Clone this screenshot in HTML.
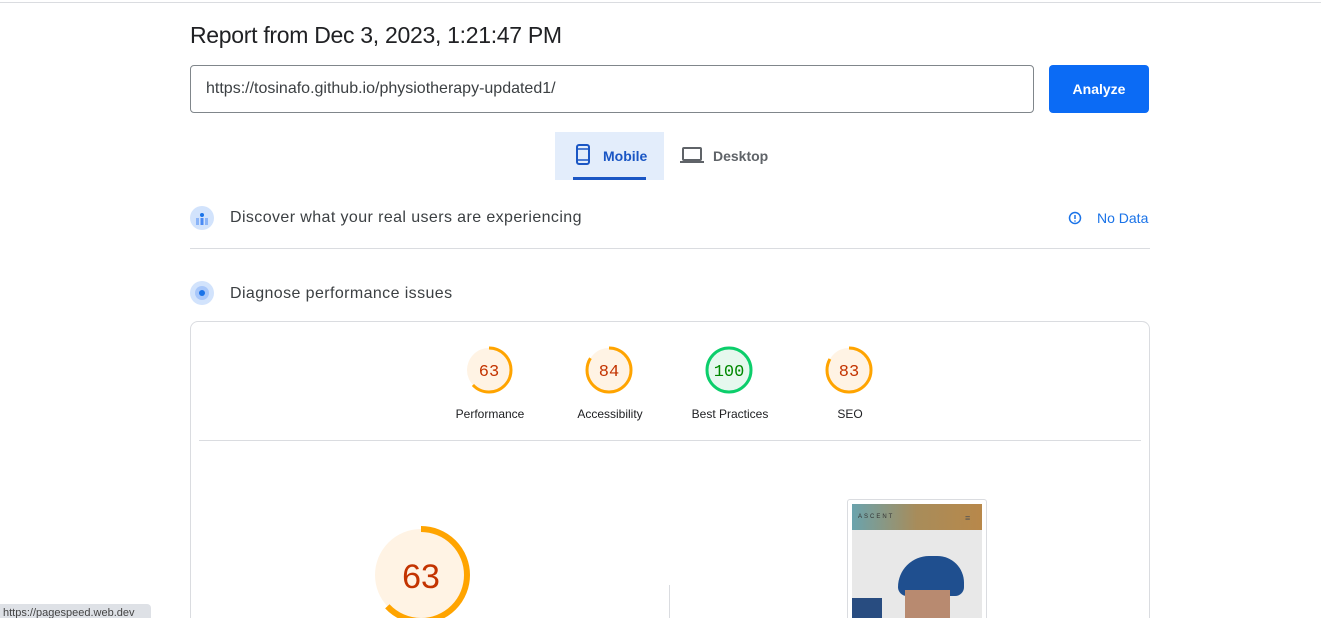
<!DOCTYPE html><html><head><style>
html,body{margin:0;width:1321px;height:618px;overflow:hidden}
body{background:#fff;font-family:"Liberation Sans",sans-serif;position:relative;color:#202124}
.a{position:absolute}
</style></head><body>
<div class="a" style="left:0;top:2px;width:1321px;height:1px;background:#dadce0"></div>
<div class="a" style="left:190px;top:22px;font-size:23px;color:#202124;letter-spacing:-0.3px">Report from Dec 3, 2023, 1:21:47 PM</div>
<div class="a" style="left:190px;top:65px;width:842px;height:46px;border:1px solid #80868b;border-radius:4px"></div>
<div class="a" style="left:206px;top:80px;font-size:16px;color:#3c4043">https://tosinafo.github.io/physiotherapy-updated1/</div>
<div class="a" style="left:1049px;top:65px;width:100px;height:48px;background:#0b6bf5;border-radius:4px;color:#fff;font-weight:bold;font-size:14px;text-align:center;line-height:48px">Analyze</div>
<div class="a" style="left:555px;top:132px;width:109px;height:48px;background:#e3edfb"></div>
<div class="a" style="left:573px;top:177px;width:73px;height:3px;background:#1a56c4"></div>
<svg class="a" style="left:574px;top:143px" width="20" height="24"><rect x="3" y="2" width="12" height="19" rx="2" fill="none" stroke="#1a56c4" stroke-width="2"/><line x1="3" y1="6" x2="15" y2="6" stroke="#1a56c4" stroke-width="1.5"/><line x1="3" y1="17" x2="15" y2="17" stroke="#1a56c4" stroke-width="1.5"/></svg>
<div class="a" style="left:603px;top:148px;font-size:14px;font-weight:bold;color:#1a56c4">Mobile</div>
<svg class="a" style="left:680px;top:146px" width="26" height="20"><rect x="3" y="2" width="18" height="12" rx="1" fill="none" stroke="#5f6368" stroke-width="2"/><line x1="0" y1="16" x2="24" y2="16" stroke="#5f6368" stroke-width="2"/></svg>
<div class="a" style="left:713px;top:148px;font-size:14px;font-weight:bold;color:#5f6368">Desktop</div>
<svg class="a" style="left:190px;top:206px" width="24" height="24"><circle cx="12" cy="12" r="12" fill="#d2e3fc"/><circle cx="12" cy="9" r="2" fill="#1a73e8"/><rect x="6" y="12" width="3" height="7" fill="#8ab4f8"/><rect x="10.5" y="12" width="3" height="7" fill="#4a8af4"/><rect x="15" y="12" width="3" height="7" fill="#8ab4f8"/></svg>
<div class="a" style="left:230px;top:209px;font-size:16px;color:#3c4043;letter-spacing:0.4px">Discover what your real users are experiencing</div>
<svg class="a" style="left:1068px;top:211px" width="14" height="14"><circle cx="7" cy="7" r="5.5" fill="none" stroke="#1a73e8" stroke-width="1.5"/><line x1="7" y1="4" x2="7" y2="8" stroke="#1a73e8" stroke-width="1.5"/><circle cx="7" cy="10" r=".8" fill="#1a73e8"/></svg>
<div class="a" style="left:1097px;top:210px;font-size:14px;color:#1a73e8">No Data</div>
<div class="a" style="left:190px;top:248px;width:960px;height:1px;background:#dadce0"></div>
<svg class="a" style="left:190px;top:281px" width="24" height="24"><circle cx="12" cy="12" r="12" fill="#d2e3fc"/><circle cx="12" cy="12" r="7" fill="#a8c7fa"/><circle cx="12" cy="12" r="3" fill="#1a73e8"/></svg>
<div class="a" style="left:230px;top:285px;font-size:16px;color:#3c4043;letter-spacing:0.4px">Diagnose performance issues</div>
<div class="a" style="left:190px;top:321px;width:958px;height:320px;border:1px solid #dadce0;border-radius:8px"></div>
<div class="a" style="left:199px;top:440px;width:942px;height:1px;background:#dadce0"></div>
<svg class="a" style="left:440px;top:340px" width="460" height="60" font-family="Liberation Mono,monospace" font-size="17" text-anchor="middle">
<g transform="translate(49,30)"><circle r="22" fill="#fff3e4"/><circle r="22" fill="none" stroke="#ffa400" stroke-width="3" stroke-dasharray="87 200" transform="rotate(-90)"/><text y="6" fill="#c33300">63</text></g>
<g transform="translate(169,30)"><circle r="22" fill="#fff3e4"/><circle r="22" fill="none" stroke="#ffa400" stroke-width="3" stroke-dasharray="116 200" transform="rotate(-90)"/><text y="6" fill="#c33300">84</text></g>
<g transform="translate(289,30)"><circle r="22" fill="#e6f8ee"/><circle r="22" fill="none" stroke="#0cce6b" stroke-width="3"/><text y="6" fill="#008800">100</text></g>
<g transform="translate(409,30)"><circle r="22" fill="#fff3e4"/><circle r="22" fill="none" stroke="#ffa400" stroke-width="3" stroke-dasharray="115 200" transform="rotate(-90)"/><text y="6" fill="#c33300">83</text></g>
</svg>
<div class="a" style="left:430px;top:407px;width:120px;text-align:center;font-size:12px">Performance</div>
<div class="a" style="left:550px;top:407px;width:120px;text-align:center;font-size:12px">Accessibility</div>
<div class="a" style="left:670px;top:407px;width:120px;text-align:center;font-size:12px">Best Practices</div>
<div class="a" style="left:790px;top:407px;width:120px;text-align:center;font-size:12px">SEO</div>
<svg class="a" style="left:369px;top:522px" width="104" height="104"><circle cx="52" cy="53" r="46" fill="#fff3e4"/><circle cx="52" cy="53" r="46" fill="none" stroke="#ffa400" stroke-width="6" stroke-dasharray="182 400" transform="rotate(-90 52 53)"/><text x="52" y="66" text-anchor="middle" font-size="34" fill="#c33300" font-family="Liberation Sans,sans-serif">63</text></svg>
<div class="a" style="left:669px;top:585px;width:1px;height:33px;background:#dadce0"></div>
<div class="a" style="left:847px;top:499px;width:138px;height:130px;border:1px solid #dadce0;border-radius:3px"></div>
<div class="a" style="left:852px;top:504px;width:130px;height:26px;background:linear-gradient(90deg,#6aa3ad,#a88c5a,#b8884a)"></div>
<div class="a" style="left:858px;top:514px;font-size:6px;color:#333;letter-spacing:2px">ASCENT</div>
<div class="a" style="left:965px;top:513px;font-size:9px;color:#555">≡</div>
<div class="a" style="left:852px;top:530px;width:130px;height:88px;background:#e8e8e8"></div>
<div class="a" style="left:898px;top:556px;width:66px;height:40px;background:#1f4f8f;border-radius:35px 30px 10px 10px"></div>
<div class="a" style="left:905px;top:590px;width:45px;height:28px;background:#b88a70"></div>
<div class="a" style="left:852px;top:598px;width:30px;height:20px;background:#284c80"></div>
<div class="a" style="left:0;top:604px;width:148px;height:14px;background:#dee1e6;border-radius:0 4px 0 0;font-size:11px;color:#444;padding-left:3px;line-height:18px;overflow:hidden">https://pagespeed.web.dev</div>
</body></html>
